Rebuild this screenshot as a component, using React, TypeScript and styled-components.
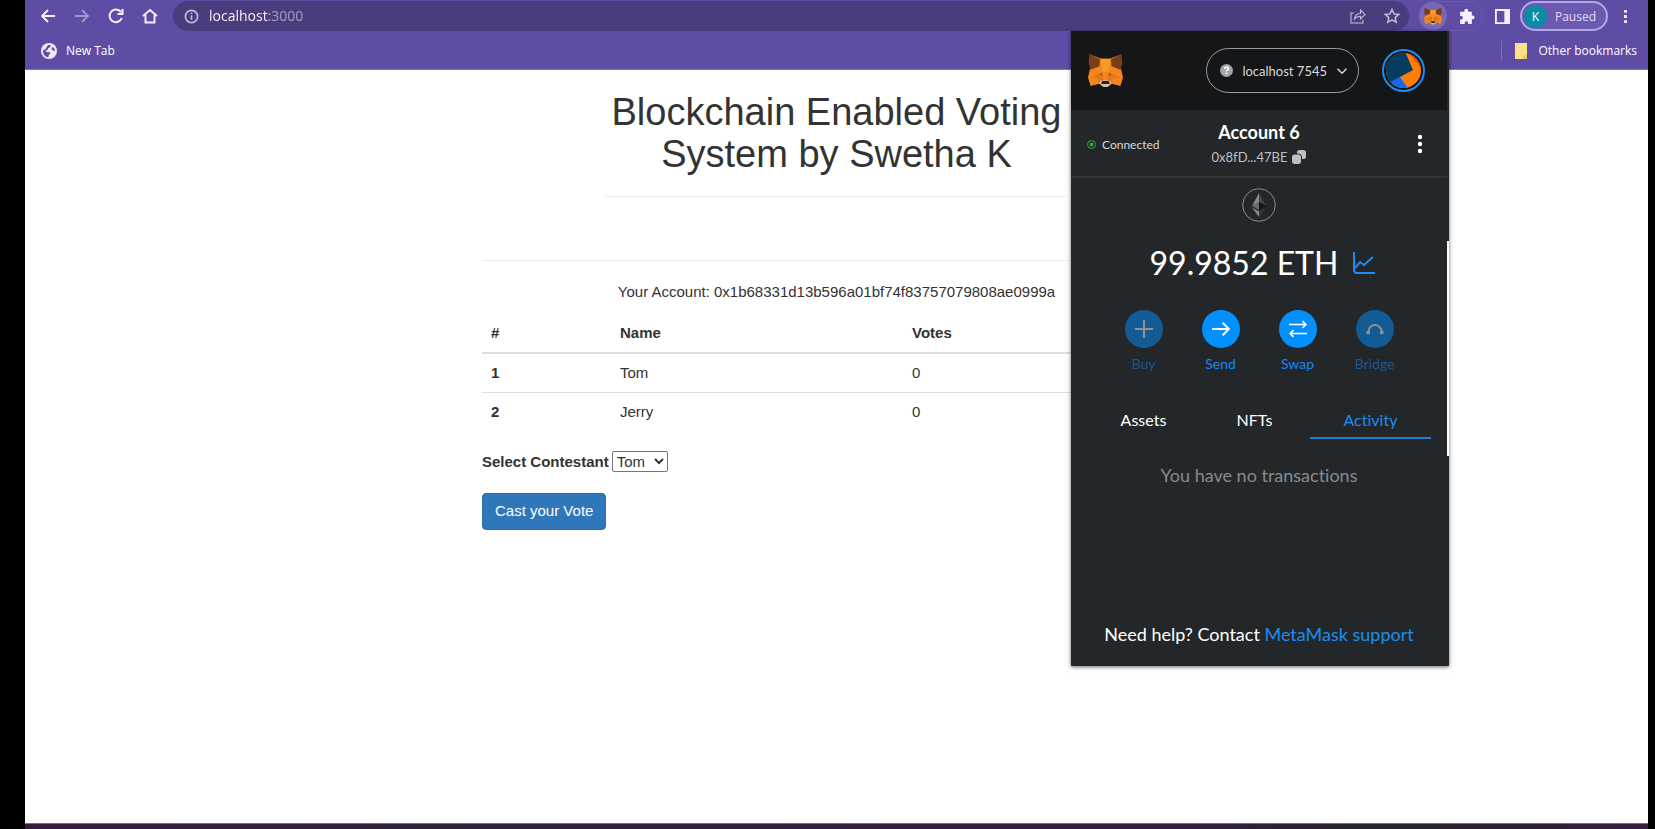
import React, { useState } from 'react';
import styled, { createGlobalStyle } from 'styled-components';

const uiFont = '"Open Sans", "Noto Sans", sans-serif';
const pageFont = '"Liberation Sans", Arial, sans-serif';
const walletFont = 'Lato, "Open Sans", sans-serif';

const GlobalStyle = createGlobalStyle`
  *, *::before, *::after { box-sizing: border-box; }
  body { margin: 0; background: #000; }
  button { font: inherit; color: inherit; cursor: pointer; }
  button:disabled { cursor: default; }
`;

/* ---------- browser window ---------- */

const Screen = styled.div`
  display: flex;
  min-height: 100vh;
  padding: 0 7px 0 25px;
  background: #000;
`;

const Browser = styled.div`
  position: relative;
  display: flex;
  flex: 1;
  flex-direction: column;
  min-width: 0;
  background: #fff;
  font-family: ${uiFont};
`;

const Chrome = styled.header`
  background: #5f4ca5;
  border-bottom: 1px solid #8476b5;
  color: #fff;
`;

const Toolbar = styled.div`
  display: flex;
  align-items: center;
  height: 32px;
  padding: 0 6px;
`;

const ToolButton = styled.button<{ $w?: number; $faded?: boolean; $muted?: boolean }>`
  display: flex;
  flex: none;
  align-items: center;
  justify-content: center;
  width: ${p => p.$w ?? 34}px;
  height: 32px;
  padding: 0;
  border: 0;
  background: none;
  color: ${p => (p.$muted ? '#c4bcdc' : '#f4f1fc')};
  opacity: ${p => (p.$faded ? 0.45 : 1)};
`;

const Omnibox = styled.form`
  display: flex;
  flex: 1;
  align-items: center;
  height: 30px;
  min-width: 0;
  margin: 0 9px 0 6px;
  padding: 0 0 0 11px;
  border-radius: 15px;
  background: #4b3d7d;
  color: #c4bcdc;
`;

const Address = styled.input`
  flex: 1;
  min-width: 0;
  height: 24px;
  margin-left: 10px;
  padding: 0;
  border: 0;
  outline: 0;
  font: 14px/24px ${uiFont};
  color: #fff;
  background: linear-gradient(90deg, #fff 60px, #a89fc9 60px);
  background-clip: text;
  -webkit-background-clip: text;
  -webkit-text-fill-color: transparent;
`;

const Extensions = styled.div`
  display: flex;
  align-items: center;
  gap: 5px;
  height: 30px;
  margin-right: 3px;
  border: 1px solid #6a58ad;
  border-radius: 15px;
`;

const ActiveExtension = styled.button`
  display: flex;
  align-items: center;
  justify-content: center;
  width: 28px;
  height: 28px;
  padding: 0;
  border: 0;
  border-radius: 50%;
  background: #7867b5;
`;

const Profile = styled.button`
  display: flex;
  flex: none;
  align-items: center;
  gap: 8px;
  height: 30px;
  padding: 0 10px 0 2px;
  border: 2px solid #b5a7e6;
  border-radius: 15px;
  background: #6c5ab0;
  font-size: 12px;
  color: #e2dafa;
`;

const Initial = styled.span`
  display: grid;
  place-items: center;
  width: 23px;
  height: 23px;
  border-radius: 50%;
  background: #0a8ba6;
  color: #fff;
`;

const Bookmarks = styled.nav`
  display: flex;
  align-items: center;
  justify-content: space-between;
  height: 37px;
  padding: 0 11px 0 16px;
`;

const Bookmark = styled.a`
  display: flex;
  align-items: center;
  gap: 9px;
  font-size: 12px;
  line-height: 20px;
  color: #fff;
  text-decoration: none;
`;

const OtherBookmarks = styled.div`
  padding-left: 12px;
  border-left: 1px solid #7d6cbb;
`;

const Taskbar = styled.footer`
  height: 6px;
  border-top: 1px solid #77757a;
  background: linear-gradient(90deg, #371b40, #30203a 25%, #351d42 70%, #26242c 84%, #371b40);
`;

/* ---------- voting page ---------- */

const Main = styled.main`
  flex: 1;
  width: 100%;
  max-width: 709px;
  margin: 0 auto;
  padding-top: 21px;
  font: 15px/21px ${pageFont};
  color: #333;
`;

const Banner = styled.div`
  max-width: 463px;
  margin: 0 auto;
  text-align: center;
`;

const Title = styled.h1`
  margin: 0;
  font-size: 38px;
  font-weight: 400;
  line-height: 42px;
`;

const Rule = styled.hr<{ $after: number }>`
  height: 1px;
  margin: 21px 0 ${p => p.$after}px;
  border: 0;
  background: #eee;
`;

const AccountLine = styled.p`
  margin: 0 0 12px;
  text-align: center;
`;

const Results = styled.table`
  width: 100%;
  margin-bottom: 20px;
  border-collapse: collapse;
  table-layout: fixed;

  th, td {
    padding: 8px 9px 9px;
    text-align: left;
    border-top: 1px solid #ddd;
  }
  thead th {
    border-top: 0;
    border-bottom: 2px solid #ddd;
  }
`;

const Column = styled.col<{ $w: string }>`
  width: ${p => p.$w};
`;

const Field = styled.div`
  display: flex;
  align-items: center;
  gap: 3px;
  margin-bottom: 21px;
`;

const Label = styled.label`
  font-weight: 700;
`;

const Choice = styled.select`
  height: 21px;
  padding: 0;
  border: 1px solid #767676;
  border-radius: 2px;
  background-color: #fff;
  font: 15px/19px ${pageFont};
  color: #333;
`;

const VoteButton = styled.button`
  padding: 6px 12px 8px;
  border: 1px solid #2e6da4;
  border-radius: 4px;
  background: #2f77bb;
  color: #fff;
`;

/* ---------- wallet popup ---------- */

const Wallet = styled.aside`
  position: absolute;
  top: 31px;
  right: 199px;
  width: 378px;
  border-right: 2px solid #24272a;
  background: #24272a;
  box-shadow: 0 1px 4px rgba(0, 0, 0, 0.6);
  font-family: ${walletFont};
  font-variant-ligatures: none;
  color: #fff;
`;

const WalletHeader = styled.div`
  display: flex;
  align-items: center;
  height: 79px;
  padding: 0 22px 0 17px;
  background: #141618;
`;

const Network = styled.button`
  display: flex;
  align-items: center;
  height: 45px;
  margin: 0 23px 0 auto;
  padding: 0 10px 0 13px;
  border: 1px solid #9a9da0;
  border-radius: 23px;
  background: none;
  font-size: 13px;
  color: #d6d9dc;
  gap: 9px;
`;

const Avatar = styled.button`
  padding: 0;
  border: 0;
  background: none;
  line-height: 0;
`;

const AccountBar = styled.div`
  display: grid;
  grid-template-columns: 1fr auto 1fr;
  align-items: center;
  height: 68px;
  padding: 2px 16px 0;
  border-bottom: 2px solid #303438;
`;

const Connected = styled.span`
  display: flex;
  align-items: center;
  gap: 6px;
  font-size: 12px;
  color: #d6d9dc;
`;

const Identity = styled.button`
  display: flex;
  flex-direction: column;
  align-items: center;
  padding: 0;
  border: 0;
  background: none;
`;

const AccountName = styled.strong`
  font-size: 18px;
  line-height: 26px;
`;

const ShortAddress = styled.span`
  display: flex;
  align-items: center;
  gap: 5px;
  font-size: 13px;
  line-height: 24px;
  color: #bbc0c5;
`;

const MenuButton = styled.button`
  justify-self: end;
  width: 22px;
  padding: 0;
  border: 0;
  background: none;
  line-height: 0;
`;

const Balance = styled.div`
  display: flex;
  flex-direction: column;
  align-items: center;
  padding-top: 10px;
`;

const Amount = styled.div`
  display: flex;
  align-items: center;
  gap: 15px;
  margin: 16px 0 22px;
  padding-left: 7px;
  font-size: 32px;
  line-height: 50px;
`;

const Actions = styled.div`
  display: flex;
  justify-content: center;
  gap: 17px;
`;

const Action = styled.button`
  display: flex;
  flex-direction: column;
  align-items: center;
  gap: 6px;
  width: 60px;
  padding: 0;
  border: 0;
  background: none;
  font-size: 14px;
  line-height: 20px;
  color: #1288f5;

  &:disabled { color: #1288f5; opacity: 0.5; }
`;

const Disc = styled.span`
  display: grid;
  place-items: center;
  width: 38px;
  height: 38px;
  border-radius: 50%;
  background: #0390ff;
  color: #fff;
`;

const Tabs = styled.div`
  display: grid;
  grid-template-columns: 11fr 11fr 12fr;
  margin: 27px 16px 0 17px;
`;

const Tab = styled.button<{ $active?: boolean }>`
  height: 38px;
  padding: 0;
  border: 0;
  border-bottom: 2px solid ${p => (p.$active ? '#1c80d8' : 'transparent')};
  background: none;
  font-size: 16px;
  color: ${p => (p.$active ? '#1c8cf0' : '#fff')};
`;

const Empty = styled.p`
  margin: 24px 0 0;
  text-align: center;
  font-size: 18px;
  line-height: 24px;
  color: #858b91;
`;

const Help = styled.p`
  margin: 135px 0 0;
  padding-bottom: 20px;
  text-align: center;
  font-size: 18px;
  line-height: 24px;
`;

const HelpLink = styled.a`
  color: #1c8cf0;
  text-decoration: none;
`;

const ScrollThumb = styled.span`
  position: absolute;
  top: 210px;
  right: -2px;
  width: 2px;
  height: 215px;
  background: #fff;
`;

/* ---------- icons ---------- */

type IconProps = { d: string; size?: number; stroke?: number; fill?: boolean };

const Icon = ({ d, size = 16, stroke = 2, fill }: IconProps) => (
  <svg width={size} height={size} viewBox="0 0 16 16" aria-hidden="true"
    fill={fill ? 'currentColor' : 'none'} stroke={fill ? 'none' : 'currentColor'} strokeWidth={stroke}>
    <path d={d} />
  </svg>
);

const Fox = ({ size }: { size: number }) => (
  <svg width={size} height={size} viewBox="0 0 104 98" aria-hidden="true">
    <path fill="#f6851b" d="M36 14h32l30 30 6 26-8 24-24-6-8 4H40l-8-4-24 6L0 70l6-26z" />
    <path fill="#e2761b" d="M4 0l34 13v6zM100 0L66 13v6z" />
    <path fill="#763e1a" d="M4 0l32 16-2 20-26 11-6-18zM100 0L68 16l2 20 26 11 6-18z" />
    <path fill="#f89b2d" d="M37 14h30l-7 40H44z" />
    <path fill="#e4761b" d="M27 60l16-7 3 26-14 9-28-16zM77 60l-16-7-3 26 14 9 28-16z" />
    <path fill="#f6851b" d="M2 72h28l2 16-24 6zM102 72H74l-2 16 24 6z" />
    <path fill="#6b4a32" d="M33 60l8-2 2 6zM71 60l-8-2-2 6z" />
    <path fill="#d7c1b3" d="M33 85l8-6h22l8 6-9 11-5 2H47l-5-2z" />
    <path fill="#2b2623" d="M42 80h20l3 9H39z" />
  </svg>
);

const Globe = () => (
  <svg width="16" height="16" viewBox="0 0 16 16" aria-hidden="true">
    <circle cx="8" cy="8" r="8" fill="#eeeafa" />
    <path fill="#5f4ca5" d="M7 2l3 .2-1 2-2 1-.5 1.8L4 8l2.600 1.200L8.500 9l1 1.500-1.500 1-.7 2.800C4 14 1.700 11 2 7.500L4.500 6zM11 4l2 1 1.200 3-2.200-.5-1.500-1.500z" />
  </svg>
);

const Jazzicon = () => (
  <svg width="43" height="43" viewBox="0 0 43 43" aria-hidden="true">
    <defs><clipPath id="jazz"><circle cx="21.500" cy="21.500" r="17.500" /></clipPath></defs>
    <circle cx="21.500" cy="21.500" r="20.500" fill="#141618" stroke="#1c8cf0" strokeWidth="2" />
    <g clipPath="url(#jazz)">
      <rect width="43" height="43" fill="#ff7f05" />
      <path fill="#033d5f" d="M0 0h22l9 21-13 7-13 10H0z" />
      <path fill="#1568f5" d="M8 33l10-5 7 10-7 5z" />
      <path fill="#f5400a" d="M24 2l14 7 2 12-6-9z" />
    </g>
  </svg>
);

const Ether = () => (
  <svg width="34" height="34" viewBox="0 0 34 34" aria-hidden="true">
    <circle cx="17" cy="17" r="16.300" fill="none" stroke="#8a8e92" />
    <path fill="#8c8c8c" d="M17 5v9l-7 4z" />
    <path fill="#444" d="M17 5l7 13-7-4z" />
    <path fill="#6a6a6a" d="M10 18l7-4v8z" />
    <path fill="#141414" d="M24 18l-7-4v8z" />
    <path fill="#8c8c8c" d="M10 19.500l7 4V29z" />
    <path fill="#383838" d="M24 19.500l-7 4V29z" />
  </svg>
);

const Chart = () => (
  <svg width="22" height="22" viewBox="0 0 22 22" fill="none" stroke="#1c8cf0" strokeWidth="2" aria-hidden="true">
    <path d="M1 0v18q0 3 3 3h18M2 16l5-6 4 3 9-8" />
  </svg>
);

const puzzle = 'M6 2.500a1.800 1.800 0 013.600 0V3.500H13V7h.8a1.800 1.800 0 010 3.600H13V15H9.500v-1a1.600 1.600 0 00-3.200 0v1H2v-4.200h1a1.600 1.600 0 000-3.200H2V3.500h4z';

const candidates = [
  { id: 1, name: 'Tom', votes: 0 },
  { id: 2, name: 'Jerry', votes: 0 },
];

const actions = [
  { label: 'Buy', d: 'M8 0v16M0 8h16', size: 18, disabled: true },
  { label: 'Send', d: 'M0 8h15M9.500 2.500L15 8l-5.500 5.500', size: 18 },
  { label: 'Swap', d: 'M0 4h15M12 1l3 3-3 3M16 12H1M4 9l-3 3 3 3', size: 18, stroke: 1.4 },
  { label: 'Bridge', d: 'M2 10.500C3 2.500 13 2.500 14 10.500M2 10.200a.8.8 0 100 1.600.8.8 0 000-1.600M14 10.200a.8.8 0 100 1.600.8.8 0 000-1.600', size: 18, disabled: true },
];

const tabs = ['Assets', 'NFTs', 'Activity'];

export default function App() {
  const [url, setUrl] = useState('localhost:3000');
  const [choice, setChoice] = useState('Tom');
  const [tab, setTab] = useState('Activity');

  return (
    <>
      <GlobalStyle />
      <Screen>
        <Browser>
          <Chrome>
            <Toolbar>
              <ToolButton aria-label="Back"><Icon d="M15 8H2M8 2L2 8l6 6" stroke={1.8} /></ToolButton>
              <ToolButton aria-label="Forward" $faded><Icon d="M1 8h13M8 2l6 6-6 6" stroke={1.8} /></ToolButton>
              <ToolButton aria-label="Reload"><Icon d="M13.800 10A6.300 6.300 0 1113 4.200M14.500 1v5h-5" stroke={2} /></ToolButton>
              <ToolButton aria-label="Home"><Icon d="M1 8l7-6 7 6M3.500 7v7.500h9V7" stroke={1.9} /></ToolButton>
              <Omnibox onSubmit={e => e.preventDefault()}>
                <Icon d="M8 1.500a6.500 6.500 0 100 13 6.500 6.500 0 000-13M8 7v4.500M8 4v1.700" size={15} stroke={1.8} />
                <Address aria-label="Address" value={url} onChange={e => setUrl(e.target.value)} />
                <ToolButton type="button" aria-label="Share" $muted><Icon d="M4 5H1v10h12v-3M4.500 11c.5-4 3-5.500 6-5.500V2L15 6.500 10.500 11V8.200c-3 0-4.500.8-6 2.800z" stroke={1.1} /></ToolButton>
                <ToolButton type="button" aria-label="Bookmark" $muted><Icon d="M8 1.500l2 4.400 4.700.5-3.500 3.200 1 4.700L8 11.900l-4.200 2.400 1-4.700L1.300 6.400 6 5.900z" stroke={1.5} /></ToolButton>
              </Omnibox>
              <Extensions>
                <ActiveExtension aria-label="MetaMask"><Fox size={18} /></ActiveExtension>
                <ToolButton aria-label="Extensions" $w={30}><Icon d={puzzle} size={17} fill /></ToolButton>
              </Extensions>
              <ToolButton aria-label="Side panel">
                <Icon d="M0 0h16v16H0zM2 2v12h8V2z" size={15} fill />
              </ToolButton>
              <Profile><Initial>K</Initial>Paused</Profile>
              <ToolButton aria-label="Menu">
                <Icon d="M6.500 1h3v3h-3zM6.500 6.500h3v3h-3zM6.500 12h3v3h-3z" size={15} fill />
              </ToolButton>
            </Toolbar>
            <Bookmarks>
              <Bookmark href="#new-tab"><Globe />New Tab</Bookmark>
              <OtherBookmarks>
                <Bookmark href="#bookmarks">
                  <svg width="15" height="16" viewBox="0 0 15 16" aria-hidden="true">
                    <path fill="#fbe08a" d="M1 0h12v16H1z" /><path fill="#f0c95c" d="M9 16v-3l4-2v5z" />
                  </svg>
                  Other bookmarks
                </Bookmark>
              </OtherBookmarks>
            </Bookmarks>
          </Chrome>

          <Main>
            <Banner>
              <Title>Blockchain Enabled Voting System by Swetha K</Title>
              <Rule $after={63} />
            </Banner>
            <Rule $after={20} />
            <AccountLine>Your Account: 0x1b68331d13b596a01bf74f83757079808ae0999a</AccountLine>
            <Results>
              <colgroup><Column $w="129px" /><Column $w="292px" /><Column $w="auto" /></colgroup>
              <thead>
                <tr><th scope="col">#</th><th scope="col">Name</th><th scope="col">Votes</th></tr>
              </thead>
              <tbody>
                {candidates.map(c => (
                  <tr key={c.id}><th scope="row">{c.id}</th><td>{c.name}</td><td>{c.votes}</td></tr>
                ))}
              </tbody>
            </Results>
            <Field>
              <Label htmlFor="contestant">Select Contestant</Label>
              <Choice id="contestant" value={choice} onChange={e => setChoice(e.target.value)}>
                {candidates.map(c => <option key={c.id}>{c.name}</option>)}
              </Choice>
            </Field>
            <VoteButton>Cast your Vote</VoteButton>
          </Main>

          <Taskbar />

          <Wallet>
            <WalletHeader>
              <Fox size={35} />
              <Network>
                <svg width="13" height="13" viewBox="0 0 13 13" aria-hidden="true">
                  <circle cx="6.500" cy="6.500" r="6.500" fill="#9fa6ae" />
                  <path d="M4.700 5q0-2 1.900-2t1.900 1.700q0 .8-1 1.300t-.9 1.400M6.600 8.600v1.700" fill="none" stroke="#fff" strokeWidth="1.500" />
                </svg>
                localhost 7545
                <Icon d="M2 5l6 6 6-6" size={12} stroke={2} />
              </Network>
              <Avatar aria-label="Accounts"><Jazzicon /></Avatar>
            </WalletHeader>
            <AccountBar>
              <Connected>
                <svg width="9" height="9" viewBox="0 0 9 9" aria-hidden="true">
                  <circle cx="4.500" cy="4.500" r="4" fill="none" stroke="#28a745" />
                  <circle cx="4.500" cy="4.500" r="2" fill="#28a745" />
                </svg>
                Connected
              </Connected>
              <Identity>
                <AccountName>Account 6</AccountName>
                <ShortAddress>
                  0x8fD...47BE
                  <svg width="14" height="14" viewBox="0 0 14 14" aria-hidden="true">
                    <rect x="5" width="9" height="9" rx="2.500" fill="#bbc0c5" />
                    <rect x="-.5" y="4" width="10" height="10.500" rx="3" fill="#bbc0c5" stroke="#24272a" />
                  </svg>
                </ShortAddress>
              </Identity>
              <MenuButton aria-label="Account options">
                <svg width="22" height="20" viewBox="0 0 22 20" fill="#fff" aria-hidden="true">
                  <circle cx="11" cy="3" r="2.200" /><circle cx="11" cy="10" r="2.200" /><circle cx="11" cy="17" r="2.200" />
                </svg>
              </MenuButton>
            </AccountBar>
            <Balance>
              <Ether />
              <Amount>99.9852 ETH <Chart /></Amount>
            </Balance>
            <Actions>
              {actions.map(a => (
                <Action key={a.label} disabled={a.disabled}>
                  <Disc><Icon d={a.d} size={a.size} stroke={a.stroke ?? 1.8} /></Disc>
                  {a.label}
                </Action>
              ))}
            </Actions>
            <Tabs role="tablist">
              {tabs.map(t => (
                <Tab key={t} role="tab" aria-selected={t === tab} $active={t === tab} onClick={() => setTab(t)}>{t}</Tab>
              ))}
            </Tabs>
            <Empty>You have no transactions</Empty>
            <Help>Need help? Contact <HelpLink href="#support">MetaMask support</HelpLink></Help>
            <ScrollThumb />
          </Wallet>
        </Browser>
      </Screen>
    </>
  );
}
